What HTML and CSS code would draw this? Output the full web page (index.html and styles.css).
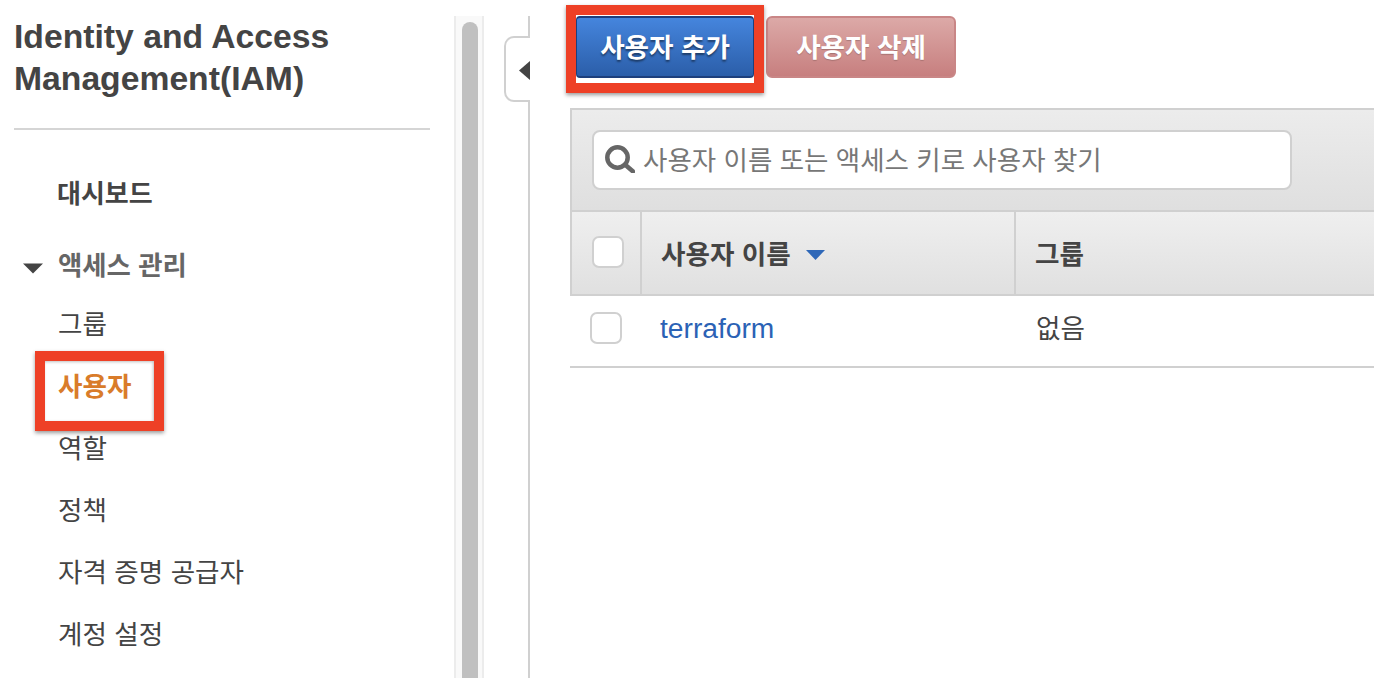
FILE: index.html
```html
<!DOCTYPE html>
<html lang="ko">
<head>
<meta charset="utf-8">
<title>IAM 사용자</title>
<link rel="stylesheet" href="styles.css">
</head>
<body>
<div class="page">
  <aside class="sidebar">
    <h1 class="title">Identity and Access Management(IAM)</h1>
    <nav class="nav">
      <a class="nav-dash">대시보드</a>
      <div class="nav-group"><svg class="caret" width="20" height="11" viewBox="0 0 20 11"><path d="M0 0.500h20L10 10.500z" fill="#444"/></svg>액세스 관리</div>
      <a class="nav-item">그룹</a>
      <a class="nav-item active">사용자</a>
      <a class="nav-item">역할</a>
      <a class="nav-item">정책</a>
      <a class="nav-item">자격 증명 공급자</a>
      <a class="nav-item">계정 설정</a>
    </nav>
  </aside>
  <div class="scroll-track"><div class="scroll-thumb"></div></div>
  <div class="gutter">
    <div class="collapse-tab"><svg width="11" height="19" viewBox="0 0 11 19"><path d="M11 0v19L0 9.500z" fill="#444"/></svg></div>
  </div>
  <main class="main">
    <div class="actions">
      <button class="btn btn-primary">사용자 추가</button>
      <button class="btn btn-danger">사용자 삭제</button>
    </div>
    <section class="panel">
      <div class="toolbar">
        <div class="search">
          <svg class="search-icon" width="30" height="28" viewBox="0 0 30 28"><circle cx="12.500" cy="12.500" r="10.200" fill="none" stroke="#666" stroke-width="4.500"/><path d="M20.500 20l7.500 6.500" stroke="#666" stroke-width="4.500" stroke-linecap="round"/></svg>
          <span>사용자 이름 또는 액세스 키로 사용자 찾기</span>
        </div>
      </div>
      <div class="thead">
        <div class="th th-check"><span class="checkbox"></span></div>
        <div class="th th-name">사용자 이름<svg class="sort" width="19" height="10" viewBox="0 0 19 10"><path d="M0 0h19L9.500 10z" fill="#2f68b8"/></svg></div>
        <div class="th th-group">그룹</div>
      </div>
      <div class="tr">
        <div class="td td-check"><span class="checkbox"></span></div>
        <div class="td td-name"><a class="link">terraform</a></div>
        <div class="td td-group">없음</div>
      </div>
    </section>
  </main>
  <div class="mark mark-nav"></div>
  <div class="mark mark-btn"></div>
</div>
</body>
</html>
```
FILE: styles.css
```css
* { box-sizing: border-box; }
html, body { margin: 0; padding: 0; background: #fff; }
body { font-family: "Liberation Sans", "Noto Sans CJK KR", sans-serif; color: #444; }
.page { position: relative; display: flex; width: 1374px; height: 678px; overflow: hidden; }

.sidebar { flex: none; width: 454px; padding: 15px 24px 0 14px; }
.title { margin: 0; height: 115px; border-bottom: 2px solid #d5d5d5; font-size: 33.700px; line-height: 42px; font-weight: 700; color: #444; }
.nav { display: flex; flex-direction: column; font-size: 26.600px; }
.nav-dash { height: 40px; margin-top: 44px; padding-left: 43px; line-height: 40px; font-weight: 700; font-size: 26px; }
.nav-group { display: flex; align-items: center; height: 40px; margin-top: 32px; margin-bottom: 8px; padding-left: 9px; line-height: 40px; font-weight: 700; color: #666; font-size: 26.400px; }
.caret { margin-right: 15px; margin-top: 5px; }
.nav-item { height: 62px; padding-left: 44px; line-height: 62px; }
.nav-item.active { color: #d97c2a; font-weight: 700; }

.scroll-track { flex: none; width: 30px; height: 662px; margin-top: 16px; border-left: 2px solid #ececec; border-right: 2px solid #ececec; background: #f9f9f9; padding: 6px 4px 0 6px; }
.scroll-thumb { height: 100%; border-radius: 8px 8px 0 0; background: #c0c0c0; }

.gutter { flex: none; width: 47px; height: 662px; margin: 16px 0 0 -1px; border-right: 2px solid #d0d0d0; position: relative; }
.collapse-tab { position: absolute; top: 20px; right: -2px; width: 26px; height: 66px; background: #fff; border: 2px solid #d0d0d0; border-right: 0; border-radius: 10px 0 0 10px; display: flex; align-items: center; justify-content: flex-end; padding-top: 2px; }

.main { flex: 1; min-width: 0; padding: 16px 0 0 40px; }
.actions { display: flex; gap: 12px; padding-left: 6px; height: 92px; align-items: flex-start; }
.btn { height: 62px; font-family: inherit; font-size: 26.600px; font-weight: 700; color: #fff; padding: 0 0 3px; }
.btn-primary { width: 178px; border: 0 solid #1d3f7c; border-width: 2px 1px; border-radius: 4px; background: linear-gradient(#4585dd, #2b5ea9); text-shadow: 0 2px 2px rgba(0,0,0,.45); }
.btn-danger { width: 190px; border: 2px solid #c98686; border-radius: 6px; background: linear-gradient(#dca9a7, #c77f7f); text-shadow: 0 1px 1px rgba(0,0,0,.2); }

.toolbar { height: 104px; padding: 20px 0 0 20px; border: 2px solid #d0d0d0; border-width: 2px 0 2px 2px; background: linear-gradient(#ececec, #dfdfdf); }
.search { display: flex; align-items: center; gap: 8px; width: 700px; height: 60px; padding: 0 0 4px 11px; background: #fff; border: 2px solid #d0d0d0; border-radius: 8px; font-size: 26.500px; color: #777; }
.search-icon { margin-top: 2px; }
.thead { display: flex; height: 84px; border-bottom: 2px solid #d0d0d0; border-left: 2px solid #d0d0d0; background: linear-gradient(#efefef, #e0e0e0); font-size: 26.600px; font-weight: 700; }
.th { display: flex; align-items: center; padding-bottom: 2px; }
.th-check { width: 70px; padding-left: 20px; border-right: 2px solid #d0d0d0; }
.th-name { width: 374px; padding-left: 19px; border-right: 2px solid #d0d0d0; }
.th-group { flex: 1; padding-left: 19px; }
.sort { margin-left: 15px; margin-top: 6px; }
.checkbox { display: block; width: 32px; height: 32px; background: #fff; border: 2px solid #d0d0d0; border-radius: 7px; }
.tr { display: flex; align-items: center; height: 72px; padding-bottom: 6px; border-bottom: 2px solid #d0d0d0; font-size: 26.600px; }
.td-check { width: 71px; padding-left: 20px; }
.td-name { width: 375px; padding-left: 19px; font-size: 28.200px; }
.td-group { padding: 0 0 3px 20px; }
.link { color: #2b62b5; }

.mark { position: absolute; border: 10px solid #ee4026; box-shadow: 0 2px 4px rgba(0,0,0,.4); }
.mark-nav { left: 35px; top: 351px; width: 129px; height: 80px; box-shadow: 0 2px 4px rgba(0,0,0,.4), inset -1px 1px 3px rgba(0,0,0,.25); }
.mark-btn { left: 566px; top: 5px; width: 198px; height: 88px; }
```
